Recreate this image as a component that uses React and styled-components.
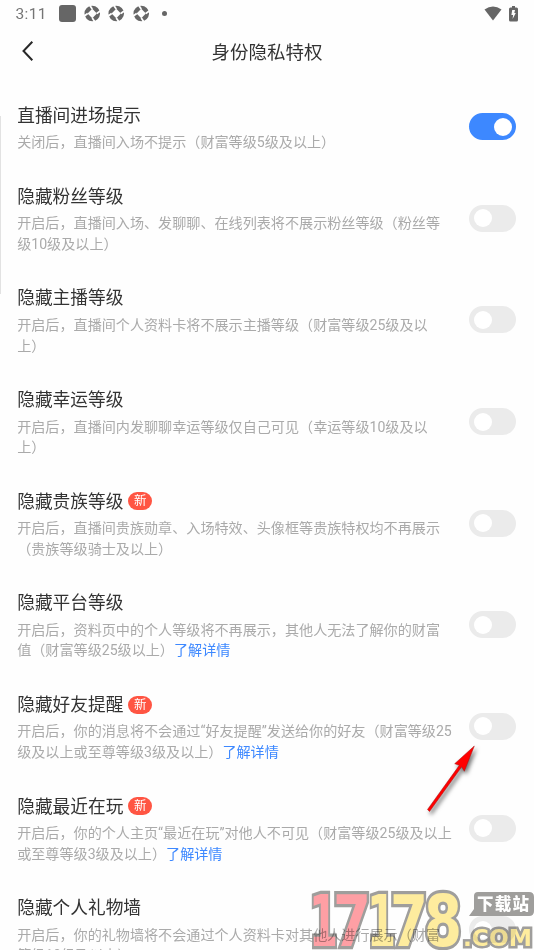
import React from "react";
import styled, { createGlobalStyle } from "styled-components";

const Global = createGlobalStyle`
  body { margin: 0; background: #fefefe; }
  * { box-sizing: border-box; }
`;

const Screen = styled.main`
  position: relative;
  width: 534px;
  height: 950px;
  overflow: hidden;
  background: #fefefe;
  font-family: Roboto, "Noto Sans CJK SC", sans-serif;
`;

const StatusBar = styled.div`
  height: 27px;
  padding: 0 16px 0 15.5px;
  display: flex;
  align-items: center;
  justify-content: space-between;
  color: #666;
`;

const StatusGroup = styled.div`
  display: flex;
  align-items: center;
  gap: ${(p) => p.$gap}px;
`;

const Clock = styled.span`
  width: 35px;
  font-size: 15.5px;
  line-height: 28px;
  letter-spacing: 0.35px;
  color: #757575;
`;

const AppSquare = styled.span`
  width: 17px;
  height: 17px;
  border-radius: 3px;
  background: #666;
`;

const Dot = styled.span`
  width: 5px;
  height: 5px;
  margin-left: 5px;
  border-radius: 50%;
  background: #666;
`;

const Header = styled.header`
  height: 50px;
  display: grid;
  grid-template-columns: 60px 1fr 60px;
  align-items: center;
`;

const BackButton = styled.button`
  border: 0;
  padding: 0 0 2px 21px;
  background: none;
  display: flex;
`;

const PageTitle = styled.h1`
  margin: 1px 0 0;
  text-align: center;
  font-size: 18.5px;
  line-height: 28px;
  font-weight: 400;
  color: #333;
`;

const List = styled.section`
  padding: 25.6px 18px 0 17.2px;
`;

const Row = styled.div`
  display: flex;
  justify-content: space-between;
  align-items: center;
  margin-bottom: 30.65px;
`;

const RowTitle = styled.h2`
  margin: 0 0 3.2px;
  height: 26.5px;
  display: flex;
  align-items: center;
  gap: 5px;
  font-size: 17.7px;
  line-height: 26px;
  font-weight: 400;
  color: #333;
`;

const Badge = styled.span`
  width: 24px;
  height: 18px;
  margin-bottom: 1px;
  border-radius: 9px;
  background: #ff5543;
  color: #fff;
  font-size: 12.5px;
  line-height: 17.5px;
  text-align: center;
`;

const Description = styled.p`
  margin: 0;
  font-size: 14.1px;
  line-height: 20.65px;
  color: #aaa;
  white-space: pre;
`;

const DetailLink = styled.a`
  color: #3d88ff;
`;

const Switch = styled.button`
  width: 47px;
  height: 27px;
  flex: none;
  margin: 0 -0.3px 1.6px 0;
  padding: 0 4.5px;
  border: 0;
  border-radius: 14px;
  display: flex;
  align-items: center;
  justify-content: ${(p) => (p.$on ? "flex-end" : "flex-start")};
  background: ${(p) => (p.$on ? "#3d88ff" : "#ebebeb")};
`;

const Knob = styled.span`
  width: 18px;
  height: 18px;
  border-radius: 50%;
  background: #fff;
`;

const EdgeHandle = styled.div`
  position: absolute;
  left: 0;
  top: 116px;
  width: 1px;
  height: 178px;
  background: #e2e2e2;
`;

const Pointer = styled.svg`
  position: absolute;
  left: 415px;
  top: 735px;
  filter: drop-shadow(2px 3px 2px rgba(0, 0, 0, 0.55));
`;

const SiteMark = styled.svg`
  position: absolute;
  left: 304px;
  top: 884px;
  mix-blend-mode: multiply;
`;

const rows = [
  { title: "直播间进场提示", text: "关闭后，直播间入场不提示（财富等级5级及以上）", on: true },
  { title: "隐藏粉丝等级", text: "开启后，直播间入场、发聊聊、在线列表将不展示粉丝等级（粉丝等\n级10级及以上）" },
  { title: "隐藏主播等级", text: "开启后，直播间个人资料卡将不展示主播等级（财富等级25级及以\n上）" },
  { title: "隐藏幸运等级", text: "开启后，直播间内发聊聊幸运等级仅自己可见（幸运等级10级及以\n上）" },
  { title: "隐藏贵族等级", isNew: true, text: "开启后，直播间贵族勋章、入场特效、头像框等贵族特权均不再展示\n（贵族等级骑士及以上）" },
  { title: "隐藏平台等级", link: true, text: "开启后，资料页中的个人等级将不再展示，其他人无法了解你的财富\n值（财富等级25级以上）" },
  { title: "隐藏好友提醒", isNew: true, link: true, text: "开启后，你的消息将不会通过“好友提醒”发送给你的好友（财富等级25\n级及以上或至尊等级3级及以上）" },
  { title: "隐藏最近在玩", isNew: true, link: true, text: "开启后，你的个人主页“最近在玩”对他人不可见（财富等级25级及以上\n或至尊等级3级及以上）" },
  { title: "隐藏个人礼物墙", text: "开启后，你的礼物墙将不会通过个人资料卡对其他人进行展示（财富\n等级10级及以上）" },
];

function ShutterIcon() {
  return (
    <svg width="16.5" height="17" viewBox="0 0 17 17">
      <circle cx="8.5" cy="8.5" r="8" fill="#666" />
      <path d="M8.5 3.7 13.3 8.5 8.5 13.3 3.7 8.5Z" fill="#fefefe" />
      <path d="M8.5 3.8 6 .3M13.2 8.5 16.7 6M8.5 13.2 11 16.7M3.8 8.5.3 11" stroke="#fefefe" strokeWidth="1.8" />
    </svg>
  );
}

function SettingRow({ title, text, on, isNew, link }) {
  return (
    <Row>
      <div>
        <RowTitle>
          {title}
          {isNew && <Badge>新</Badge>}
        </RowTitle>
        <Description>
          {text}
          {link && <DetailLink>了解详情</DetailLink>}
        </Description>
      </div>
      <Switch $on={on} aria-label={title}>
        <Knob />
      </Switch>
    </Row>
  );
}

const PINK = "#ffa0a5";
const YELLOW = "#ffed9f";

const digits = [
  { char: "1", x: 309, width: 29, fill: PINK },
  { char: "7", x: 333, width: 38, fill: PINK },
  { char: "1", x: 367, width: 29, fill: YELLOW },
  { char: "7", x: 390, width: 38, fill: YELLOW },
  { char: "8", x: 424, width: 38, fill: YELLOW },
];

function MarkText({ x, width, size, fill, border, children }) {
  return (
    <text
      x={x}
      y={945.5}
      fontFamily="DejaVu Sans"
      fontWeight="700"
      fontSize={size}
      textLength={width}
      lengthAdjust="spacingAndGlyphs"
      fill={fill}
      stroke="#a09f9d"
      strokeWidth={border}
      paintOrder="stroke"
    >
      {children}
    </text>
  );
}

export default function App() {
  return (
    <Screen>
      <Global />
      <StatusBar>
        <StatusGroup $gap={8}>
          <Clock>3:11</Clock>
          <AppSquare />
          <ShutterIcon />
          <ShutterIcon />
          <ShutterIcon />
          <Dot />
        </StatusGroup>
        <StatusGroup $gap={7}>
          <svg width="18" height="15" viewBox="0 0 18 15">
            <path d="M.5 3.5Q9-2.5 17.5 3.5L9 14.5Z" fill="#666" />
          </svg>
          <svg width="9" height="16" viewBox="0 0 9 16">
            <path d="M1.5 1.5H3V0H6V1.5H7.5Q9 1.5 9 3V14Q9 15.5 7.5 15.5H1.5Q0 15.5 0 14V3Q0 1.5 1.5 1.5Z" fill="#666" />
            <path d="M3.2 4H6L5.3 7H6.8L3.6 13 4.1 9H2.4Z" fill="#fff" />
          </svg>
        </StatusGroup>
      </StatusBar>
      <Header>
        <BackButton aria-label="返回">
          <svg width="13" height="22" viewBox="0 0 13 22">
            <path d="M11.3 1.7 2.5 11 11.3 20.3" fill="none" stroke="#292929" strokeWidth="2" />
          </svg>
        </BackButton>
        <PageTitle>身份隐私特权</PageTitle>
      </Header>
      <List>
        {rows.map((row) => (
          <SettingRow key={row.title} {...row} />
        ))}
      </List>
      <EdgeHandle />
      <Pointer width="70" height="85" viewBox="415 735 70 85">
        <path d="M474.3 746 454.7 763.7 459.3 765.3 427.5 809.5 429.5 811.5 461.7 766.8 464.3 771.3Z" fill="#f00" stroke="#a01010" strokeWidth=".5" />
      </Pointer>
      <SiteMark width="230" height="66" viewBox="304 884 230 66">
        {digits.map((d) => (
          <MarkText key={d.x} x={d.x} width={d.width} size={71.5} fill={d.fill} border={6.5}>
            {d.char}
          </MarkText>
        ))}
        <MarkText x={463} width={69} size={23} border={5} fill={YELLOW}>.COM</MarkText>
        <path d="M478 892H529Q534 892 534 897V911Q534 916 529 916H469L474 909V896Q474 892 478 892Z" fill="#a09f9d" />
        <text x="477" y="910" fontFamily="Noto Sans CJK SC" fontWeight="900" fontSize="16.5" textLength="52" fill="#fff">下载站</text>
      </SiteMark>
    </Screen>
  );
}
